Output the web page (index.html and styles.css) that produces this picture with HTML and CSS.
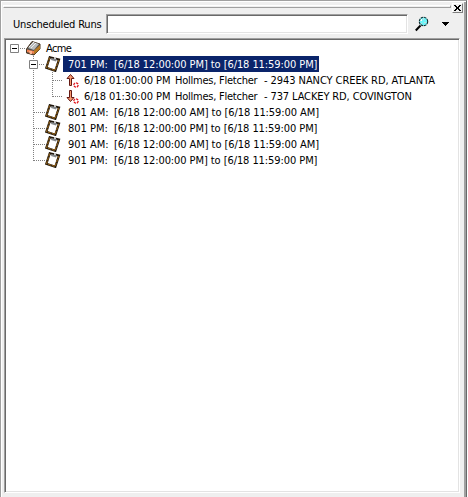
FILE: index.html
```html
<!DOCTYPE html>
<html lang="en">
<head>
<meta charset="utf-8">
<title>Unscheduled Runs</title>
<link rel="stylesheet" href="styles.css">
</head>
<body>
<svg class="symbols" width="0" height="0" aria-hidden="true">
  <defs>
    <symbol id="minus" viewBox="0 0 9 9"><path d="M.5.5h8v8h-8z" fill="#fff" stroke="#808080"/><path d="M2 4.5h5" stroke="#000"/></symbol>
    <symbol id="clip" viewBox="0 0 16 16">
      <path d="M4.800 1.200 14 3.500 10.300 14.800 1.300 11.800Z" fill="#fff" stroke="#20170c" stroke-width="2.200"/>
      <path d="M4.600 1.500 1.600 11.500 10 14.500 13.800 4" fill="none" stroke="#8a5c18" stroke-width="1.300" stroke-dasharray="3 1"/>
      <path d="M6.500 2 12 3.500 11 5.500 6 4Z" fill="#85898c"/><path d="M9 1h2v2H9z" fill="#c8c8c8"/>
    </symbol>
    <symbol id="ring" viewBox="0 0 6 6"><circle cx="3" cy="3" r="2.200" fill="#fff" stroke="#e01018" stroke-width="1.300" stroke-dasharray="2.300 .8"/></symbol>
  </defs>
</svg>
<main class="panel">
  <div class="caption"><div class="grip"></div>
    <button class="close" aria-label="Close"><svg width="7" height="6" viewBox="0 0 7 6" shape-rendering="crispEdges"><path d="M0 0h2v1h1v1h1V1h1V0h2v1H6v1H5v2h1v1h1v1H5V5H4V4H3v1H2v1H0V5h1V4h1V2H1V1H0z"/></svg></button>
  </div>
  <div class="toolbar">
    <label class="label" for="q">Unscheduled Runs</label>
    <input id="q" class="query" type="text">
    <svg class="find" width="14" height="16" viewBox="0 0 14 16"><path d="M.800 14.500 5.500 9.500" stroke="#000" stroke-width="2"/><circle cx="8.500" cy="5.500" r="4.200" fill="#6ff4f8" stroke="#102c30" stroke-width="1.100" stroke-dasharray="2.600 .7"/><path d="M5 4h2v1H5zM8 2h1v2H8zM9 6h2v1H9zM6 7h1v1H6z" fill="#c5dede"/><path d="M6 3h1v2H6z" fill="#fff"/></svg>
    <svg class="drop" width="7" height="4" viewBox="0 0 7 4" shape-rendering="crispEdges"><path d="M0 0h7v1H6v1H5v1H4v1H3V3H2V2H1V1H0z"/></svg>
  </div>
  <div class="tree">
    <div class="row">
      <svg class="guide" width="36" height="16"><path class="dots" d="M13 8.500h6M26.500 14v2"/><use href="#minus" x="3" y="4" width="9" height="9"/>
        <path d="M19.500 9 25 1.500 33 4v5l-6 6-7.500-2z" fill="#51504e" stroke="#4b3824"/><path d="M21 8 26 2l6 2-5 6z" fill="#b9bbbb"/><path d="M22 7 27 2M24 8 29 3" stroke="#eee"/><path d="M20 9.500 27 11v3l-7-2z" fill="#f08050"/><path d="M27 10.500 33 5v4l-6 5.500z" fill="#b77922"/><path d="M22 11h3v3h-2z" fill="#ffb38d"/></svg>
      <span class="text root"><span class="w-acme">Acme</span></span>
    </div>
    <div class="row">
      <svg class="guide" width="55" height="16"><path class="dots" d="M26.500 0v16M32 8.500h6"/><use href="#minus" x="22" y="4" width="9" height="9"/><use href="#clip" x="38" y="0" width="16" height="16"/></svg>
      <span class="text sel"><span class="w-id">701 PM:</span><span class="w-range">[6/18 12:00:00 PM] to [6/18 11:59:00 PM]</span></span>
    </div>
    <div class="row">
      <svg class="guide" width="74" height="16"><path class="dots" d="M26.500 0v16M45.500 0v16M46 8.500h10"/><path d="M63.500 2.500 67 6.500h-2.500v7h-2v-7H60z" fill="#f79a70" stroke="#641812"/><use href="#ring" x="66" y="10" width="6" height="6"/></svg>
      <span class="text run"><span class="w-time">6/18 01:00:00 PM</span><span class="w-name">Hollmes, Fletcher</span><span class="w-a1">- 2943 NANCY CREEK RD, ATLANTA</span></span>
    </div>
    <div class="row">
      <svg class="guide" width="74" height="16"><path class="dots" d="M26.500 0v16M45.500 0v9M46 8.500h10"/><path d="M63.500 13.500 60 9.500h2.500v-7h2v7H67z" fill="#f79a70" stroke="#641812"/><use href="#ring" x="66" y="10" width="6" height="6"/></svg>
      <span class="text run"><span class="w-time">6/18 01:30:00 PM</span><span class="w-name">Hollmes, Fletcher</span><span class="w-a2">- 737 LACKEY RD, COVINGTON</span></span>
    </div>
    <div class="row">
      <svg class="guide" width="55" height="16"><path class="dots" d="M26.500 0v16M27 8.500h11"/><use href="#clip" x="38" y="0" width="16" height="16"/></svg>
      <span class="text"><span class="w-id">801 AM:</span><span class="w-range">[6/18 12:00:00 AM] to [6/18 11:59:00 AM]</span></span>
    </div>
    <div class="row">
      <svg class="guide" width="55" height="16"><path class="dots" d="M26.500 0v16M27 8.500h11"/><use href="#clip" x="38" y="0" width="16" height="16"/></svg>
      <span class="text"><span class="w-id">801 PM:</span><span class="w-range">[6/18 12:00:00 PM] to [6/18 11:59:00 PM]</span></span>
    </div>
    <div class="row">
      <svg class="guide" width="55" height="16"><path class="dots" d="M26.500 0v16M27 8.500h11"/><use href="#clip" x="38" y="0" width="16" height="16"/></svg>
      <span class="text"><span class="w-id">901 AM:</span><span class="w-range">[6/18 12:00:00 AM] to [6/18 11:59:00 AM]</span></span>
    </div>
    <div class="row">
      <svg class="guide" width="55" height="16"><path class="dots" d="M26.500 0v9M27 8.500h11"/><use href="#clip" x="38" y="0" width="16" height="16"/></svg>
      <span class="text"><span class="w-id">901 PM:</span><span class="w-range">[6/18 12:00:00 PM] to [6/18 11:59:00 PM]</span></span>
    </div>
  </div>
</main>
</body>
</html>
```
FILE: styles.css
```css
* { box-sizing: border-box; }
html, body { margin: 0; height: 100%; overflow: hidden; background: #fff; }
body { font: 11px/16px Tahoma, "DejaVu Sans Condensed", "Noto Sans", sans-serif; color: #000; }
.symbols { position: absolute; }
.panel { width: 467px; height: 497px; display: flex; flex-direction: column; background: #efefef; border-style: solid; border-color: #a0a0a0 #696969 #a0a0a0 #a0a0a0; border-width: 1px 1px 0 1px; box-shadow: inset 1px 1px #fff, inset -2px 0 #a0a0a0; padding: 2px 3px 4px 2px; }
.caption { display: flex; height: 10px; align-items: flex-start; }
.grip { flex: 1; height: 3px; margin: 2px 1px 0 0; border: 1px solid #fff; border-right-color: #a0a0a0; border-bottom-color: #a0a0a0; }
.close { width: 11px; height: 10px; padding: 0 0 1px; display: flex; align-items: center; justify-content: center; background: #efefef; border: 1px solid #fff; border-right-color: #808080; border-bottom-color: #808080; }
.toolbar { display: flex; height: 25px; align-items: center; padding: 0 14px 3px 10px; }
.label { width: 93px; white-space: nowrap; line-height: 20px; padding-top: 1px; letter-spacing: -.18px; }
.query { width: 302px; height: 20px; border: 1px solid; border-color: #a0a0a0 #fff #fff #a0a0a0; box-shadow: inset 1px 1px #696969, inset -1px -1px #e3e3e3; outline: 0; background: #fff; padding: 0 3px; font: inherit; }
.find { margin-left: 7px; }
.drop { margin-left: 13px; }
.tree { flex: 1; margin: 0 3px 0 1px; background: #fff; border: 1px solid; border-color: #a0a0a0 #fff #fff #a0a0a0; box-shadow: inset 1px 1px #696969, inset -1px -1px #e3e3e3; padding: 1px 2px; }
.row { display: flex; height: 16px; }
.guide { flex: none; }
.dots { fill: none; stroke: #808080; stroke-dasharray: 1 1; }
.text { display: flex; height: 16px; padding: 1px 2px 0 6px; white-space: pre; }
.root { padding-left: 3px; }
.run { padding-left: 3px; }
.sel { background: #0a246a; color: #fff; margin-left: 1px; padding-left: 5px; }
.w-acme { letter-spacing: -.6px; }
.w-id { width: 46px; }
.w-range { letter-spacing: -.08px; }
.w-time { width: 91px; letter-spacing: -.06px; }
.w-name { width: 89px; letter-spacing: -.24px; }
.w-a1 { letter-spacing: -.07px; }
.w-a2 { letter-spacing: -.12px; }
```
